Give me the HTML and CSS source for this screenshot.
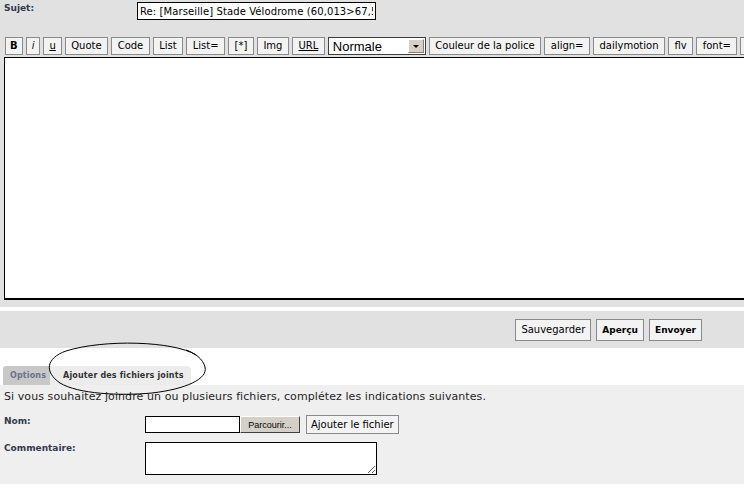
FILE: index.html
```html
<!DOCTYPE html>
<html lang="fr">
<head>
    <meta charset="UTF-8">
    <title>Poster une réponse</title>
    <link rel="stylesheet" href="styles.css">
</head>
<body>
    <form class="post" onsubmit="return false">
        <!-- sujet + barre bbcode + message -->
        <div class="editor">
            <div class="subject-row">
                <label class="label" for="subject">Sujet:</label>
                <input type="text" id="subject" class="subject" value="Re: [Marseille] Stade Vélodrome (60,013>67,5 ha)">
            </div>
            <div class="toolbar">
                <button type="button" class="tb tb-b">B</button>
                <button type="button" class="tb tb-i">i</button>
                <button type="button" class="tb tb-u">u</button>
                <button type="button" class="tb">Quote</button>
                <button type="button" class="tb">Code</button>
                <button type="button" class="tb">List</button>
                <button type="button" class="tb">List=</button>
                <button type="button" class="tb">[*]</button>
                <button type="button" class="tb">Img</button>
                <button type="button" class="tb tb-url">URL</button>
                <div class="fontsize">
                    <span>Normale</span>
                    <span class="drop"><span class="arrow"></span></span>
                </div>
                <button type="button" class="tb">Couleur de la police</button>
                <button type="button" class="tb">align=</button>
                <button type="button" class="tb">dailymotion</button>
                <button type="button" class="tb">flv</button>
                <button type="button" class="tb">font=</button>
                <button type="button" class="tb">glow=</button>
            </div>
            <textarea class="message"></textarea>
        </div>

        <div class="actions">
            <button type="button" class="btn">Sauvegarder</button>
            <button type="button" class="btn strong">Aperçu</button>
            <button type="button" class="btn strong">Envoyer</button>
        </div>

        <!-- onglets -->
        <div class="tabs">
            <span class="tab">Options</span>
            <span class="tab active">Ajouter des fichiers joints</span>
        </div>
        <div class="panel">
            <p class="hint">Si vous souhaitez joindre un ou plusieurs fichiers, complétez les indications suivantes.</p>
            <div class="field">
                <span class="label">Nom:</span>
                <div class="file">
                    <input type="text" class="file-name">
                    <button type="button" class="browse">Parcourir...</button>
                    <button type="button" class="add">Ajouter le fichier</button>
                </div>
            </div>
            <div class="field">
                <span class="label">Commentaire:</span>
                <textarea class="comment"></textarea>
            </div>
        </div>
    </form>

    <!-- cercle dessiné à la main autour de l'onglet -->
    <svg class="scribble" width="164" height="58" viewBox="0 0 164 58">
        <path d="M150 15 C128 1, 58 -1, 20 11 C0 18, -2 32, 14 43 C32 54, 74 56, 106 53 C140 49, 162 39, 159 27 C157 19, 149 13, 140 10"
              fill="none" stroke="#000" stroke-width="1"/>
    </svg>
</body>
</html>
```

FILE: styles.css
```css
html, body {
    margin: 0;
    overflow: hidden;
    background: #fff;
}

body {
    font-family: "DejaVu Sans", Verdana, sans-serif;
    font-size: 10px;
    color: #000;
    position: relative;
}

.label {
    font-weight: bold;
    color: #323a4c;
    font-size: 9px;
}

/* zone d'édition */
.editor {
    background: #e1e1e1;
    padding: 2px 0 7px 4px;
}

.subject-row {
    display: flex;
    align-items: flex-start;
}

.subject-row .label {
    width: 133px;
    padding-top: 1px;
}

.subject {
    width: 239px;
    height: 18px;
    box-sizing: border-box;
    border: 1px solid #000;
    padding: 0 2px;
    font-family: "DejaVu Sans", Verdana, sans-serif;
    font-size: 10px;
    letter-spacing: 0.1px;
    background: #fff;
    outline: none;
}

.toolbar {
    display: flex;
    gap: 3px;
    margin: 17px 0 2px 1px;
    white-space: nowrap;
}

.tb, .btn {
    flex: none;
    height: 18px;
    padding: 0 5.5px;
    border: 1px solid #8a8a8a;
    background: #f3f3f3;
    font-family: "DejaVu Sans", Verdana, sans-serif;
    font-size: 10px;
    color: #000;
    line-height: 16px;
}

.tb-b {
    font-weight: bold;
    padding: 0 4px;
}

.tb-i {
    font-style: italic;
    padding: 0 5px;
}

.tb-u {
    padding: 0 5px;
}

.tb-u, .tb-url {
    text-decoration: underline;
}

.fontsize {
    flex: none;
    width: 98px;
    height: 18px;
    box-sizing: border-box;
    border: 1px solid #404040;
    background: #fff;
    display: flex;
    align-items: center;
    justify-content: space-between;
    padding: 0 1px 0 4px;
    font-family: "Liberation Sans", Arial, sans-serif;
    font-size: 13px;
}

.drop {
    width: 16px;
    height: 14px;
    box-sizing: border-box;
    background: #d4d0c8;
    border: 1px solid;
    border-color: #fff #808080 #808080 #fff;
    display: flex;
    align-items: center;
    justify-content: center;
}

.arrow {
    border-left: 3px solid transparent;
    border-right: 3px solid transparent;
    border-top: 3px solid #000;
}

.message {
    display: block;
    width: 800px;
    height: 243px;
    box-sizing: border-box;
    border: 1px solid #000;
    border-bottom-width: 2px;
    background: #fff;
    resize: none;
}

/* boutons d'envoi */
.actions {
    margin-top: 4px;
    background: #e1e1e1;
    height: 37px;
    display: flex;
    justify-content: flex-end;
    align-items: center;
    gap: 5px;
    padding-right: 42px;
}

.btn {
    height: 22px;
    padding: 0 5px;
    line-height: 20px;
}

.btn.strong {
    font-weight: bold;
    font-size: 9px;
}

/* onglets */
.tabs {
    display: flex;
    padding: 18px 0 0 3px;
}

.tab {
    height: 19px;
    line-height: 19px;
    padding: 0 4px 0 7px;
    font-size: 8px;
    letter-spacing: 0.15px;
    font-weight: bold;
    background: #c8c8c8;
    color: #6b7386;
    border-radius: 3px 0 0 0;
}

.tab.active {
    background: #ececec;
    color: #333;
    padding: 0 7px 0 13px;
    border-radius: 0 4px 0 0;
}

.panel {
    background: #efefef;
    padding: 5px 0 9px 4px;
}

.hint {
    margin: 0 0 12px;
    font-size: 11px;
    letter-spacing: 0.08px;
    color: #1e1e1e;
}

.field {
    display: flex;
    align-items: flex-start;
    margin-bottom: 8px;
}

.field:last-child {
    margin-bottom: 0;
}

.field .label {
    width: 141px;
    padding-top: 1px;
    flex: none;
}

.file {
    display: flex;
    align-items: center;
}

.file-name {
    width: 95px;
    height: 17px;
    box-sizing: border-box;
    border: 1px solid #000;
    background: #fff;
    margin: 0;
}

.browse {
    width: 60px;
    height: 17px;
    padding: 0;
    border: 1px solid;
    border-color: #fff #404040 #404040 #fff;
    background: #d4d0c8;
    font-family: "Liberation Sans", Arial, sans-serif;
    font-size: 9px;
    color: #000;
}

.add {
    margin-left: 6px;
    height: 19px;
    padding: 0 4px;
    border: 1px solid #8a8a8a;
    background: #f3f3f3;
    font-family: "DejaVu Sans", Verdana, sans-serif;
    font-size: 10px;
    color: #000;
}

.comment {
    width: 232px;
    height: 33px;
    box-sizing: border-box;
    border: 1px solid #000;
    background: #fff;
    margin: 0;
}

.scribble {
    position: absolute;
    left: 46px;
    top: 340px;
}
```
